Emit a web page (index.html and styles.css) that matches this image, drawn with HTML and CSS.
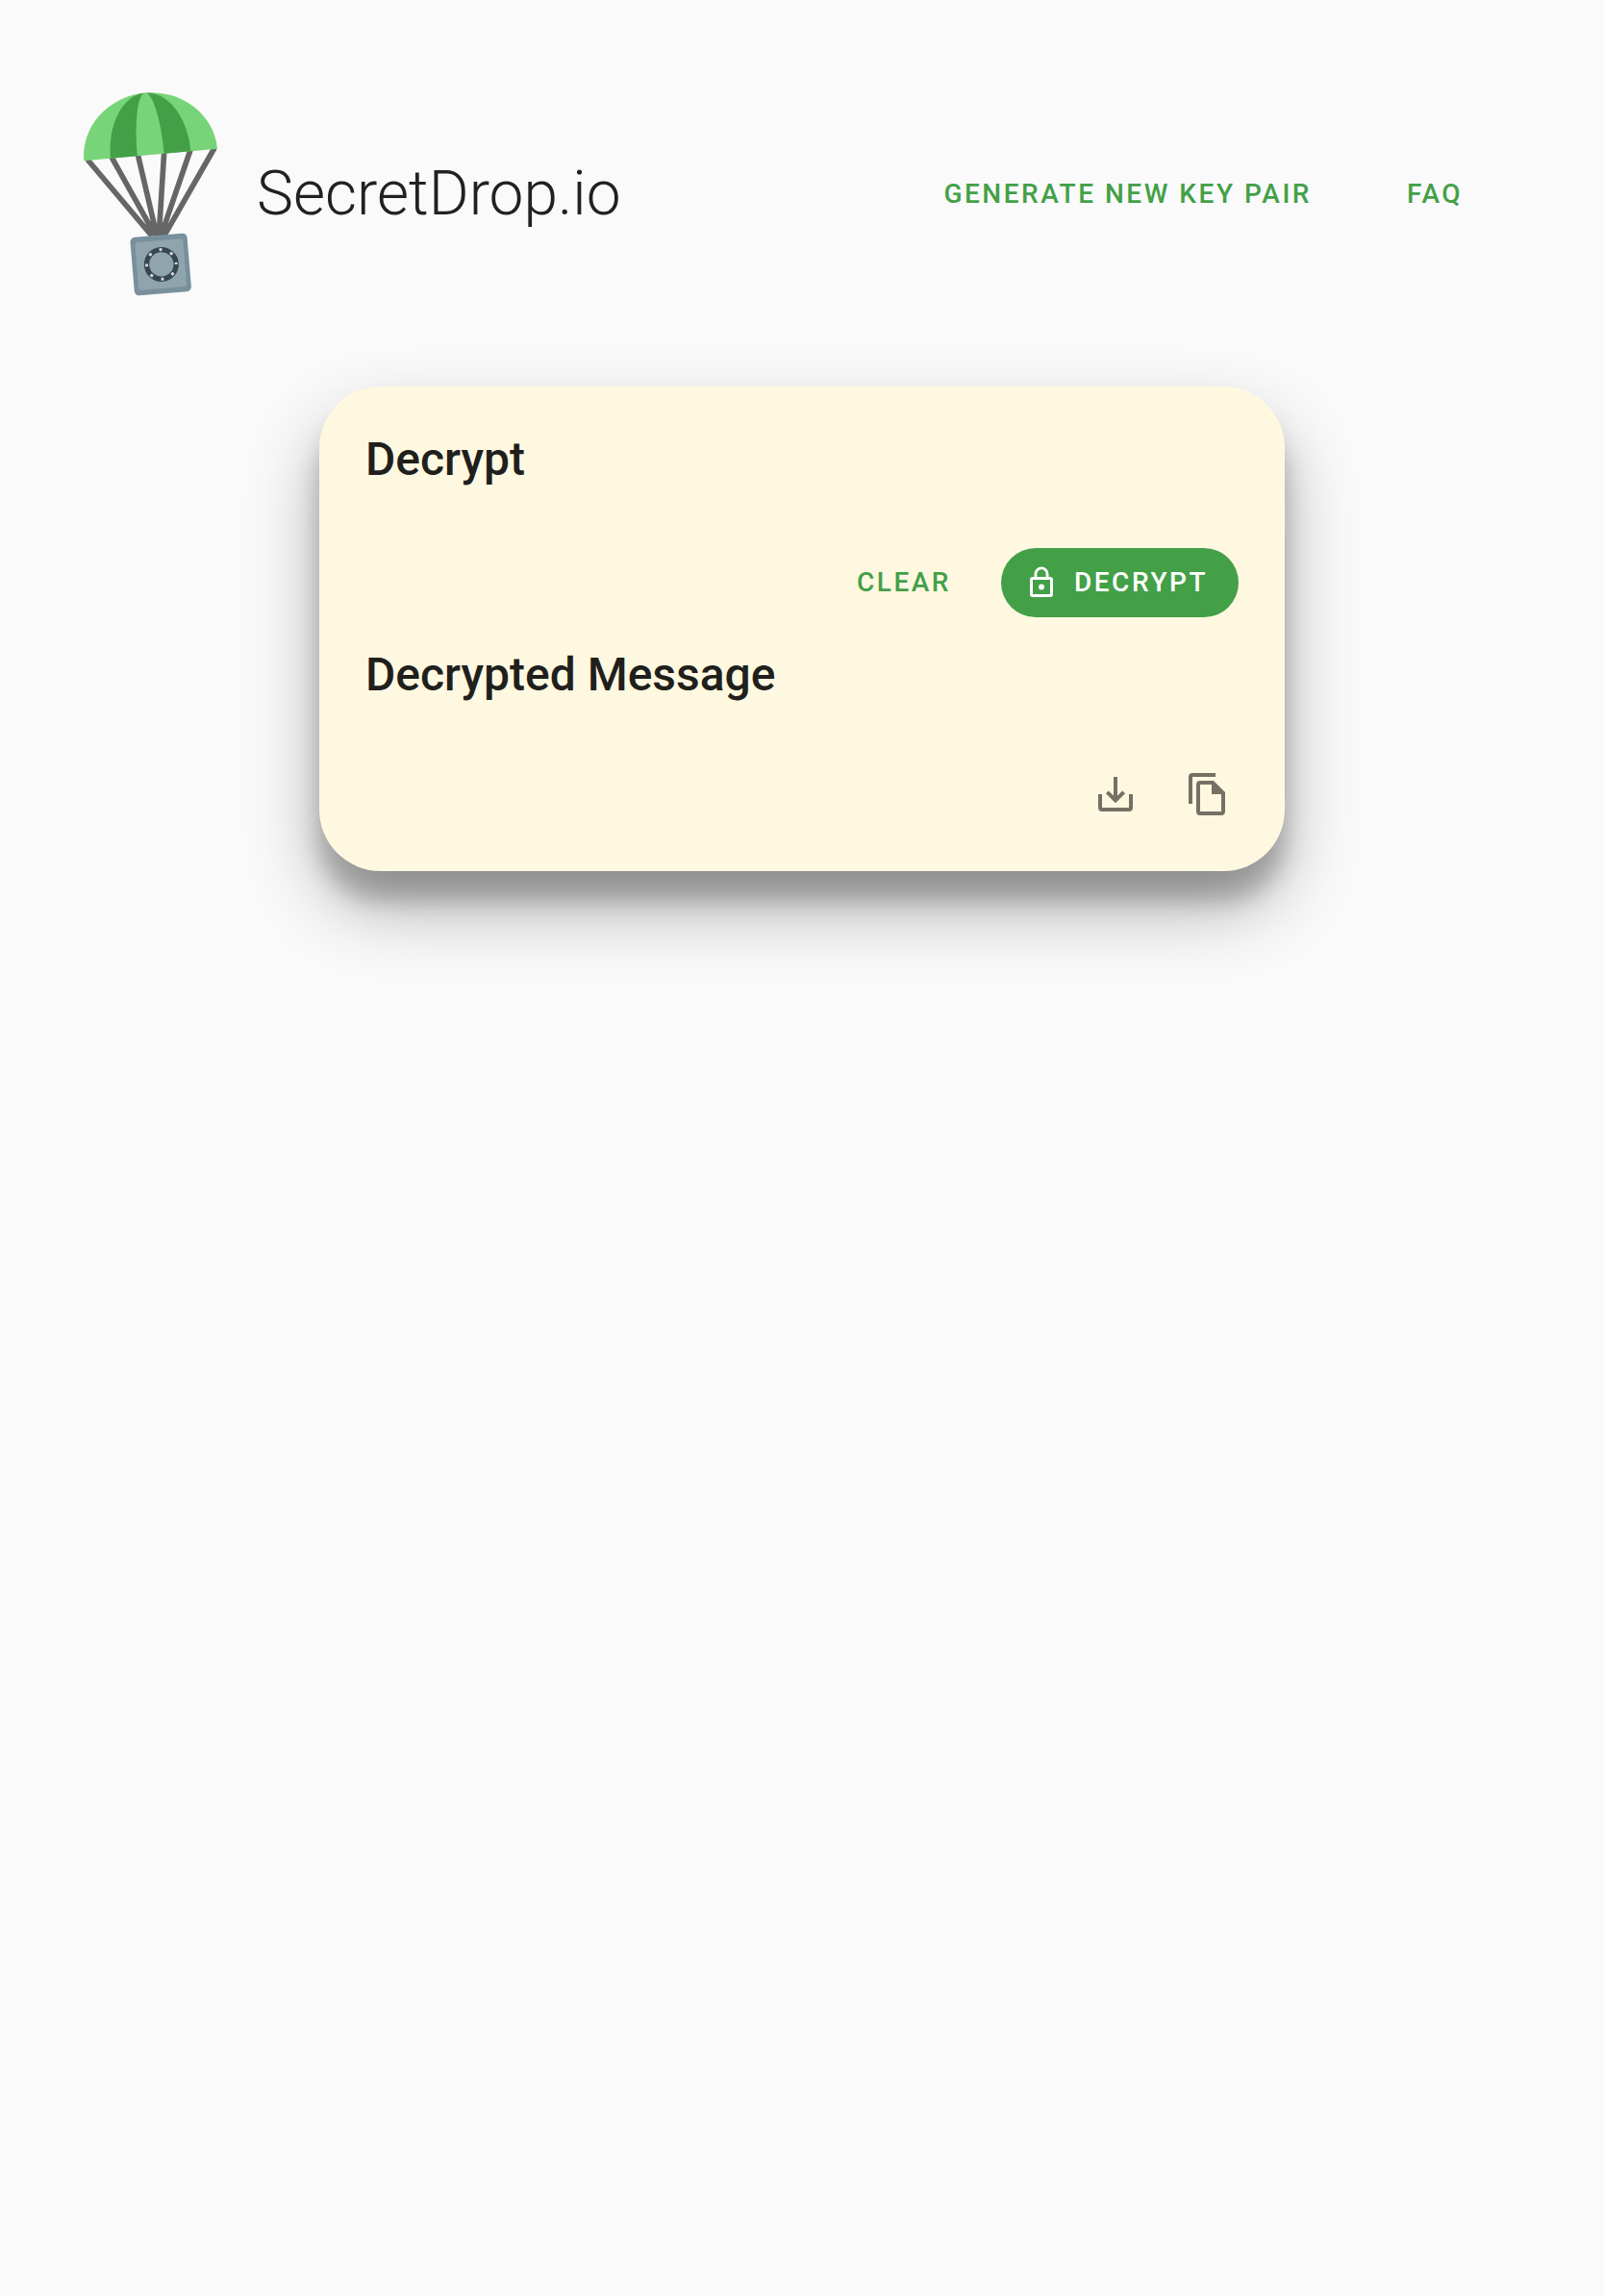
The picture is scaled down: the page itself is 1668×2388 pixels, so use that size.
FILE: index.html
```html
<!DOCTYPE html>
<html lang="en">
<head>
<meta charset="utf-8">
<meta name="viewport" content="width=device-width, initial-scale=1">
<title>SecretDrop.io</title>
<link rel="stylesheet" href="styles.css">
</head>
<body>
<header class="header">
  <a class="brand" href="#">
    <svg class="logo" viewBox="51 48 420 636" aria-hidden="true">
      <g stroke="#666" stroke-width="17" fill="none">
        <path d="M63 258L264 496M138 250L272 490M220 242L278 490M302 236L286 490M384 228L294 490M459 222L302 496"/>
      </g>
      <path d="M250 480L258 496H308L318 478Z" fill="#666"/>
      <g transform="translate(260 243) rotate(-5.2)">
        <path d="M-209 0A209 194 0 0 1 209 0Z" fill="#78d478"/>
        <path d="M-126 0A126 194 0 0 1 0 -194A42 194 0 0 0 -42 0Z" fill="#43a047"/>
        <path d="M126 0A126 194 0 0 0 0 -194A42 194 0 0 1 42 0Z" fill="#43a047"/>
      </g>
      <g transform="translate(291.5 585) rotate(-4.8)">
        <rect x="-89" y="-91" width="178" height="182" rx="15" fill="#78909c"/>
        <rect x="-75" y="-75" width="150" height="150" rx="8" fill="#90a4ae"/>
        <circle cx="2" r="46" fill="none" stroke="#37474f" stroke-width="16"/>
        <circle cx="2" r="46" fill="none" stroke="#cfd8dc" stroke-width="9" stroke-dasharray="9 27.13" stroke-dashoffset="4.5"/>
      </g>
    </svg>
    <span class="brand-name">SecretDrop.io</span>
  </a>
  <nav class="nav">
    <a class="button" href="#">Generate new key pair</a>
    <a class="button" href="#">FAQ</a>
  </nav>
</header>
<main class="main">
  <section class="card">
    <h1 class="heading">Decrypt</h1>
    <div class="actions">
      <button class="button" type="button">Clear</button>
      <button class="button button-raised" type="button">
        <svg class="button-icon" viewBox="0 0 24 24" fill="currentColor" aria-hidden="true"><path d="M12 17a2 2 0 1 0 0-4 2 2 0 0 0 0 4zm6-9h-1V6A5 5 0 0 0 7 6v2H6a2 2 0 0 0-2 2v10a2 2 0 0 0 2 2h12a2 2 0 0 0 2-2V10a2 2 0 0 0-2-2zM8.900 6a3.100 3.100 0 0 1 6.200 0v2H8.900V6zM18 20H6V10h12v10z"/></svg>
        Decrypt
      </button>
    </div>
    <h2 class="heading">Decrypted Message</h2>
    <div class="tools">
      <button class="icon-button" type="button" aria-label="Download">
        <svg class="icon" viewBox="0 0 24 24" fill="none" stroke="currentColor" stroke-width="2" aria-hidden="true"><path d="M4 12v7a1 1 0 0 0 1 1h14a1 1 0 0 0 1-1v-7M12 3v12M7.700 10.900L12 15.200l4.300-4.300"/></svg>
      </button>
      <button class="icon-button" type="button" aria-label="Copy">
        <svg class="icon" viewBox="0 0 24 24" fill="currentColor" aria-hidden="true"><path d="M16 1H4a2 2 0 0 0-2 2v14h2V3h12V1zm-1 4l6 6v10a2 2 0 0 1-2 2H8a2 2 0 0 1-2-2V7a2 2 0 0 1 2-2h7zm-1 7V7H8v14h11v-9h-5z"/></svg>
      </button>
    </div>
  </section>
</main>
</body>
</html>
```
FILE: styles.css
```css
* {
  box-sizing: border-box;
}

body {
  min-height: 100vh;
  margin: 0;
  background: #fafafa;
  color: #212121;
  font-family: Roboto, sans-serif;
}

.header {
  display: flex;
  align-items: center;
  justify-content: space-between;
  padding: 96px 96px 94px 87px;
}

.brand {
  display: flex;
  align-items: center;
  gap: 40px;
  color: inherit;
  text-decoration: none;
}

.logo {
  width: 140px;
  height: 212px;
}

.brand-name {
  font-size: 64px;
  font-weight: 300;
  line-height: 80px;
}

.nav {
  display: flex;
  gap: 16px;
}

.button {
  display: inline-flex;
  align-items: center;
  justify-content: center;
  min-width: 128px;
  height: 72px;
  margin: 0 16px;
  padding: 0 16px;
  border: 0;
  border-radius: 36px;
  background: none;
  color: #43a047;
  font: 500 28px/36px Roboto, sans-serif;
  letter-spacing: 0.09em;
  text-decoration: none;
  text-transform: uppercase;
  cursor: pointer;
}

.button-raised {
  margin-right: 0;
  padding: 0 32px 0 24px;
  gap: 16px;
  background: #43a047;
  color: #fff;
}

.button-icon {
  width: 36px;
  height: 36px;
}

.main {
  padding: 0 32px 128px;
}

.card {
  max-width: 1004px;
  margin: 0 auto;
  padding: 44px 48px 32px;
  border-radius: 64px;
  background: #fff8e1;
  box-shadow: 0 38px 76px rgba(0, 0, 0, 0.3), 0 30px 24px rgba(0, 0, 0, 0.22);
}

.heading {
  margin: 0;
  color: #211f1c;
  font-size: 48px;
  font-weight: 500;
  line-height: 64px;
}

.actions {
  display: flex;
  justify-content: flex-end;
  gap: 4px;
  padding: 60px 0 28px;
}

.tools {
  display: flex;
  justify-content: flex-end;
  margin: 44px -16px 0 0;
}

.icon-button {
  display: flex;
  align-items: center;
  justify-content: center;
  width: 96px;
  height: 96px;
  padding: 0;
  border: 0;
  background: none;
  color: #757065;
  cursor: pointer;
}

.icon {
  width: 48px;
  height: 48px;
}
```
